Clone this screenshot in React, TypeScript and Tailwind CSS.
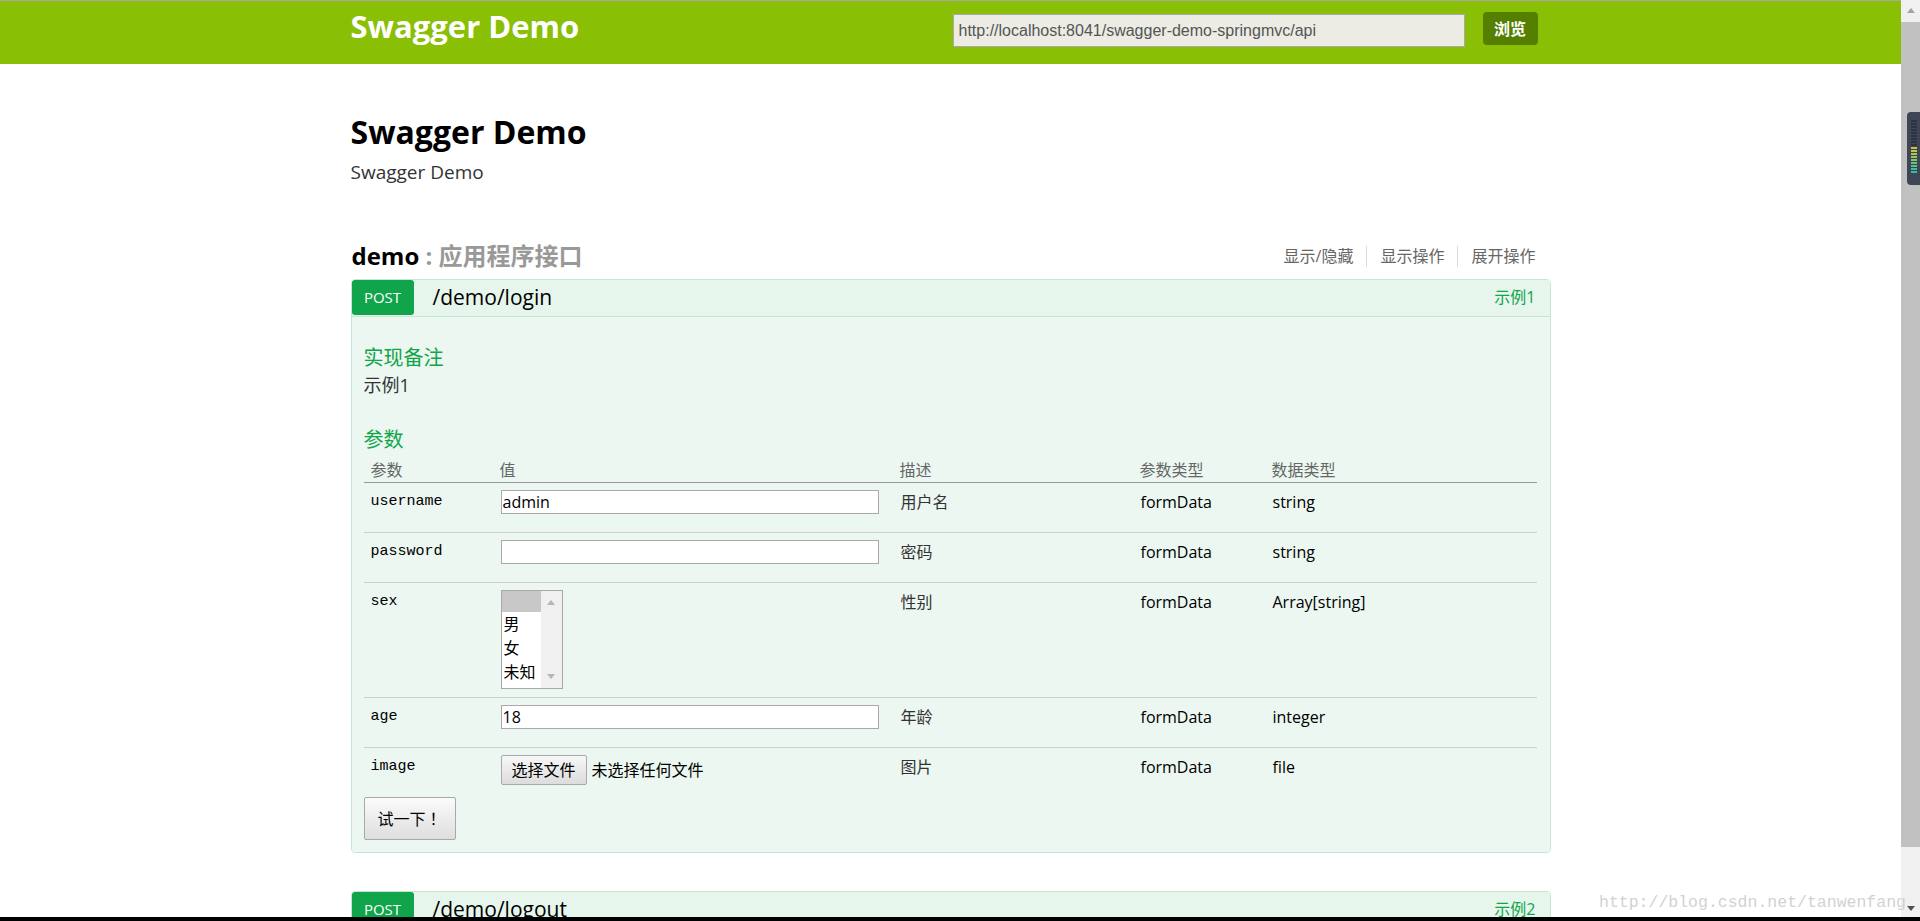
import React from "react"

const sans = "font-['Open_Sans','Noto_Sans_CJK_SC',sans-serif]"
const mono = "font-['Liberation_Mono',monospace]"

type Row = {
  name: string
  kind: "text" | "select" | "file"
  value?: string
  desc: string
  paramType: string
  dataType: string
  height: string
}

const rows: Row[] = [
  { name: "username", kind: "text", value: "admin", desc: "用户名", paramType: "formData", dataType: "string", height: "h-[50px] border-b" },
  { name: "password", kind: "text", value: "", desc: "密码", paramType: "formData", dataType: "string", height: "h-[50px] border-b" },
  { name: "sex", kind: "select", desc: "性别", paramType: "formData", dataType: "Array[string]", height: "h-[115px] border-b" },
  { name: "age", kind: "text", value: "18", desc: "年龄", paramType: "formData", dataType: "integer", height: "h-[50px] border-b" },
  { name: "image", kind: "file", desc: "图片", paramType: "formData", dataType: "file", height: "h-[42px]" },
]

// meter bars of the little desktop widget sitting over the scrollbar
const meterBars = [
  "bg-[#2c3342]", "bg-[#2c3342]", "bg-[#2c3342]", "bg-[#2c3342]", "bg-[#2c3342]",
  "bg-[#2c3342]", "bg-[#2c3342]", "bg-[#2c3342]", "bg-[#2c3342]",
  "bg-[#c9c23c]", "bg-[#c2c545]", "bg-[#b0c450]", "bg-[#9cc45a]", "bg-[#86c466]",
  "bg-[#6cc278]", "bg-[#55c08a]", "bg-[#44bd9c]", "bg-[#3cbaa8]",
]

function Arrow({ up, color = "#a3a3a3" }: { up?: boolean; color?: string }) {
  return (
    <svg width="8" height="5" viewBox="0 0 8 5">
      <path d={up ? "M0 5 L4 0 L8 5 Z" : "M0 0 L8 0 L4 5 Z"} fill={color} />
    </svg>
  )
}

function ListBox() {
  return (
    <div className="flex h-[99px] w-[62px] overflow-hidden border border-[#a9a9a9] bg-white">
      <div className="flex w-[39px] flex-col text-[16px] leading-[24px] text-black">
        <div className="h-[21px] bg-[#c8c8c8]" />
        <div className="pl-[2px]">男</div>
        <div className="pl-[2px]">女</div>
        <div className="whitespace-nowrap pl-[2px]">未知</div>
      </div>
      <div className="flex flex-1 flex-col items-center justify-between bg-[#f0f0f0] py-[9px]">
        <Arrow up color="#b5b5b5" />
        <Arrow color="#b5b5b5" />
      </div>
    </div>
  )
}

function ValueCell({ row }: { row: Row }) {
  if (row.kind === "select") return <ListBox />
  if (row.kind === "file") {
    return (
      <div className="flex items-center gap-[5px] text-[16px] text-black">
        <button className="h-[30px] w-[86px] rounded-[2px] border border-[#a9a9a9] bg-gradient-to-b from-[#f8f8f8] to-[#dcdcdc] text-[16px] text-black">
          选择文件
        </button>
        <span>未选择任何文件</span>
      </div>
    )
  }
  return (
    <input
      readOnly
      value={row.value}
      className={`h-[24px] w-[378px] border border-[#a9a9a9] bg-white px-[1px] text-[16px] text-black outline-none ${sans}`}
    />
  )
}

function Operation({ path, summary, children }: { path: string; summary: string; children?: React.ReactNode }) {
  return (
    <div className="rounded-[4px] border border-[#c3e8d1]">
      <div className="flex h-[37px] items-start border-b border-[#c3e8d1] bg-[#e7f6ec]">
        <span className="flex h-[35px] w-[62px] items-center justify-center rounded-[3px] bg-[#10a54a] text-[15px] text-white">
          POST
        </span>
        <span className="ml-[19px] text-[21px] leading-[35px] text-black">{path}</span>
        <span className="ml-auto pr-[14px] text-[16px] leading-[35px] text-[#10a54a]">{summary}</span>
      </div>
      {children}
    </div>
  )
}

export default function App() {
  return (
    <div className={`relative flex h-[921px] w-full flex-col overflow-hidden bg-white ${sans}`}>
      <div className="flex min-h-0 flex-1">
        <div className="min-w-0 flex-1 overflow-hidden">
          {/* Header */}
          <div className="h-px bg-[#a8a8a8]" />
          <div className="h-[63px] bg-[#89bf04]">
            <div className="mx-auto flex w-[1200px] items-start">
              <div className="mt-[6px] text-[31px] font-bold leading-[38px] text-white">Swagger Demo</div>
              <input
                readOnly
                value="http://localhost:8041/swagger-demo-springmvc/api"
                className="ml-auto mt-[13px] h-[33px] w-[512px] border border-[#a9a9a9] bg-[#ecebe4] px-[5px] font-['Liberation_Sans',sans-serif] text-[16px] text-[#555] outline-none"
              />
              <button className="ml-[18px] mr-[13px] mt-[11px] h-[33px] w-[55px] rounded-[4px] bg-[#547f00] text-[16px] font-bold text-white">
                浏览
              </button>
            </div>
          </div>

          <div className="mx-auto w-[1200px]">
            <h1 className="mt-[49px] text-[32px] font-bold leading-[38px] text-black">Swagger Demo</h1>
            <div className="mt-[8px] text-[19px] leading-[26px] text-[#333]">Swagger Demo</div>

            {/* Resource */}
            <div className="mt-[56px] flex h-[30px] items-center">
              <h2 className="pl-[1px] text-[24px] font-bold text-black">
                demo <span className="text-[#999]">: 应用程序接口</span>
              </h2>
              <div className="ml-auto flex items-center pr-[15px] text-[16px] text-[#666]">
                <span>显示/隐藏</span>
                <span className="mx-[13px] h-[21px] w-px bg-[#ddd]" />
                <span>显示操作</span>
                <span className="mx-[13px] h-[21px] w-px bg-[#ddd]" />
                <span>展开操作</span>
              </div>
            </div>

            <div className="mt-[8px]">
              <Operation path="/demo/login" summary="示例1">
                <div className="rounded-b-[4px] bg-[#ebf7f0] pb-[12px] pl-[12px] pr-[13px] pt-[27px]">
                  <div className="text-[20px] leading-[28px] text-[#10a54a]">实现备注</div>
                  <div className="text-[18px] leading-[26px] text-[#333]">示例1</div>
                  <div className="mt-[28px] text-[20px] leading-[28px] text-[#10a54a]">参数</div>

                  <div className="mt-[4px] grid h-[25px] grid-cols-[130px_400px_240px_132px_270px] border-b border-[#999] text-[16px] leading-[24px] text-[#666]">
                    <div className="pl-[7px]">参数</div>
                    <div className="pl-[6px]">值</div>
                    <div className="pl-[6px]">描述</div>
                    <div className="pl-[6px]">参数类型</div>
                    <div className="pl-[6px]">数据类型</div>
                  </div>

                  {rows.map((row) => (
                    <div
                      key={row.name}
                      className={`grid grid-cols-[130px_400px_240px_132px_270px] border-[#d0d0d0] pt-[7px] text-[16px] leading-[24px] text-black ${row.height}`}
                    >
                      <div className={`pl-[7px] text-[15px] ${mono}`}>{row.name}</div>
                      <div className="pl-[7px]">
                        <ValueCell row={row} />
                      </div>
                      <div className="pl-[7px] text-[#333]">{row.desc}</div>
                      <div className="pl-[7px]">{row.paramType}</div>
                      <div className="pl-[7px]">{row.dataType}</div>
                    </div>
                  ))}

                  <button className="mt-[7px] h-[43px] w-[92px] rounded-[2px] border border-[#a9a9a9] bg-gradient-to-b from-[#fbfbfb] to-[#dedede] text-[16px] text-black">
                    试一下<span className="font-['Noto_Sans_CJK_TC',sans-serif]">！</span>
                  </button>
                </div>
              </Operation>
            </div>

            <div className="mt-[38px]">
              <Operation path="/demo/logout" summary="示例2">
                <div className="h-[200px] bg-[#ebf7f0]" />
              </Operation>
            </div>
          </div>
        </div>

        {/* Scrollbar */}
        <div className="flex w-[19px] shrink-0 flex-col bg-[#f0f0f0]">
          <div className="flex h-[22px] items-center justify-center pb-[2px]">
            <Arrow up />
          </div>
          <div className="h-[825px] bg-[#c1c1c1]" />
          <div className="flex-1" />
          <div className="flex h-[17px] items-center justify-center">
            <Arrow color="#505050" />
          </div>
        </div>
      </div>
      <div className="h-[4px] shrink-0 bg-black" />

      {/* desktop meter widget overlapping the scrollbar */}
      <div className="absolute right-0 top-[112px] flex h-[73px] w-[13px] flex-col items-center gap-[1px] rounded-l-[4px] bg-[#3e4554] pt-[8px]">
        {meterBars.map((c, i) => (
          <div key={i} className={`h-[2px] w-[6px] ${c}`} />
        ))}
      </div>

      {/* watermark */}
      <div className="absolute bottom-[8px] left-[1599px] whitespace-nowrap font-['Liberation_Mono',monospace] text-[16.5px] leading-[20px] text-[#d2d2d2]">
        http://blog.csdn.net/tanwenfang
      </div>
    </div>
  )
}
